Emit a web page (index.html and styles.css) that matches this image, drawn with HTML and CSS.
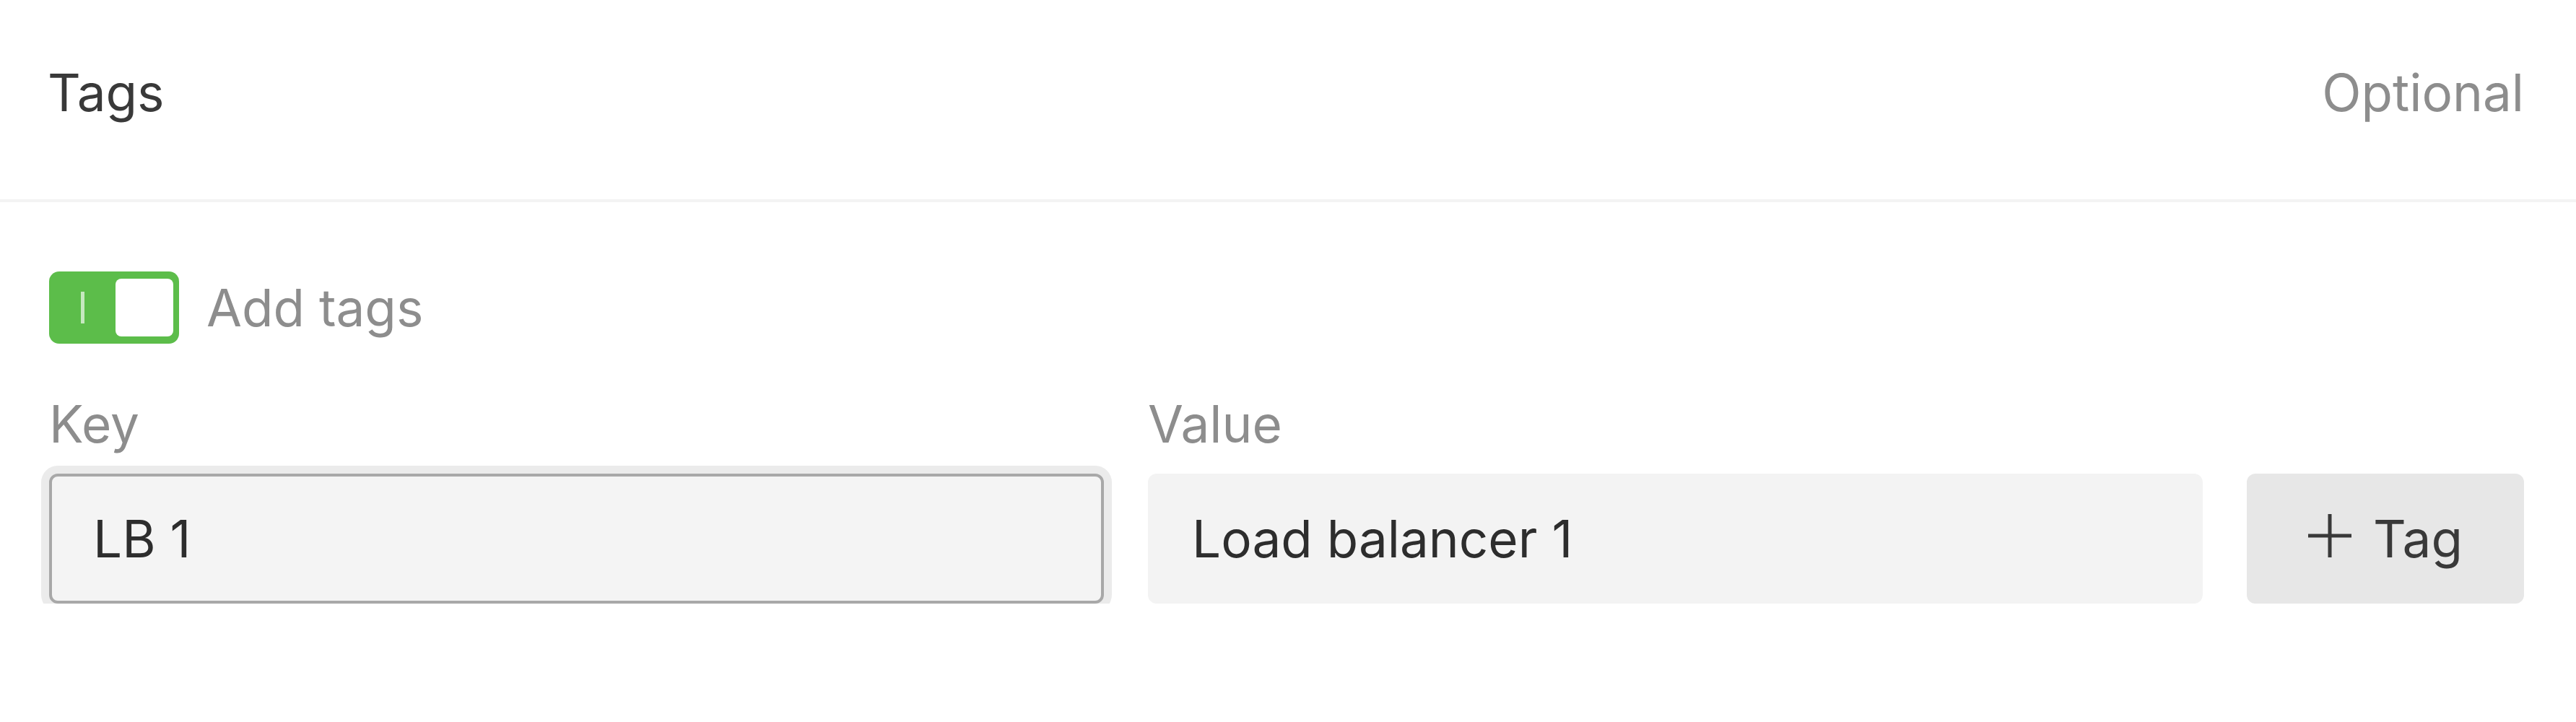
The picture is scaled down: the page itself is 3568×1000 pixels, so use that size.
FILE: index.html
```html
<!DOCTYPE html>
<html lang="en">
<head>
<meta charset="UTF-8" />
<meta name="viewport" content="width=device-width, initial-scale=1" />
<title>Tags</title>
<link rel="stylesheet" href="styles.css">
</head>
<body>
  <section class="panel">
    <header class="panel-head">
      <h2>Tags</h2>
      <span class="optional">Optional</span>
    </header>

    <div class="panel-body">
      <label class="switch-row">
        <span class="switch">
          <span class="switch-mark"></span>
          <span class="switch-knob"></span>
        </span>
        <span class="switch-label">Add tags</span>
      </label>

      <div class="tag-grid">
        <label for="tagKey" class="field-label">Key</label>
        <label for="tagValue" class="field-label">Value</label>
        <span></span>

        <input type="text" id="tagKey" class="field focused" value="LB 1" />
        <input type="text" id="tagValue" class="field" value="Load balancer 1" />
        <button type="button" class="add-btn">
          <svg width="60" height="60" viewBox="0 0 60 60" aria-hidden="true">
            <path d="M30 0v60M0 30h60" stroke="#393939" stroke-width="5" fill="none" />
          </svg>
          <span>Tag</span>
        </button>
      </div>
    </div>
  </section>
</body>
</html>
```

FILE: styles.css
```css
body {
  margin: 0;
  background: #fff;
  font-family: Inter, Roboto, "Liberation Sans", sans-serif;
  font-size: 71px;
  line-height: 88px;
  color: #393939;
}
.panel-head {
  display: flex;
  justify-content: space-between;
  padding: 84px 72px 104px 66px;
  border-bottom: 4px solid #f3f3f3;
}
h2 {
  margin: 0;
  font-size: 71px;
  font-weight: 400;
  color: #393939;
}
.optional {
  color: #8d8d8d;
}
.panel-body {
  padding: 96px 72px 0 68px;
}
.switch-row {
  display: flex;
  align-items: center;
  gap: 38px;
  margin-bottom: 67px;
}
.switch {
  width: 180px;
  height: 100px;
  box-sizing: border-box;
  padding: 8px;
  border-radius: 14px;
  background: #5cbd4a;
  display: flex;
  align-items: center;
  justify-content: space-between;
}
.switch-mark {
  width: 5px;
  height: 44px;
  margin-left: 36px;
  background: rgba(255,255,255,0.65);
}
.switch-knob {
  width: 80px;
  height: 80px;
  border-radius: 8px;
  background: #fff;
}
.switch-label {
  color: #8d8d8d;
}
.tag-grid {
  display: grid;
  grid-template-columns: 1fr 1fr 384px;
  column-gap: 61px;
  row-gap: 25px;
}
.field-label {
  color: #8d8d8d;
}
.field {
  height: 180px;
  box-sizing: border-box;
  margin: 0;
  padding: 0 0 0 61px;
  border: none;
  border-radius: 12px;
  background: #f3f3f3;
  font-family: inherit;
  font-size: 71px;
  color: #2d2d2d;
  outline: none;
  min-width: 0;
}
.field.focused {
  padding-left: 57px;
  border: 4px solid #a8a8a8;
  background: #f4f4f4;
  box-shadow: 0 0 0 11px #ebebeb;
}
.add-btn {
  height: 180px;
  margin: 0;
  border: none;
  border-radius: 12px;
  background: #e7e7e7;
  display: flex;
  align-items: center;
  justify-content: center;
  gap: 30px;
  font-family: inherit;
  font-size: 71px;
  color: #393939;
  cursor: pointer;
}
.add-btn svg {
  margin-top: -8px;
}
```
